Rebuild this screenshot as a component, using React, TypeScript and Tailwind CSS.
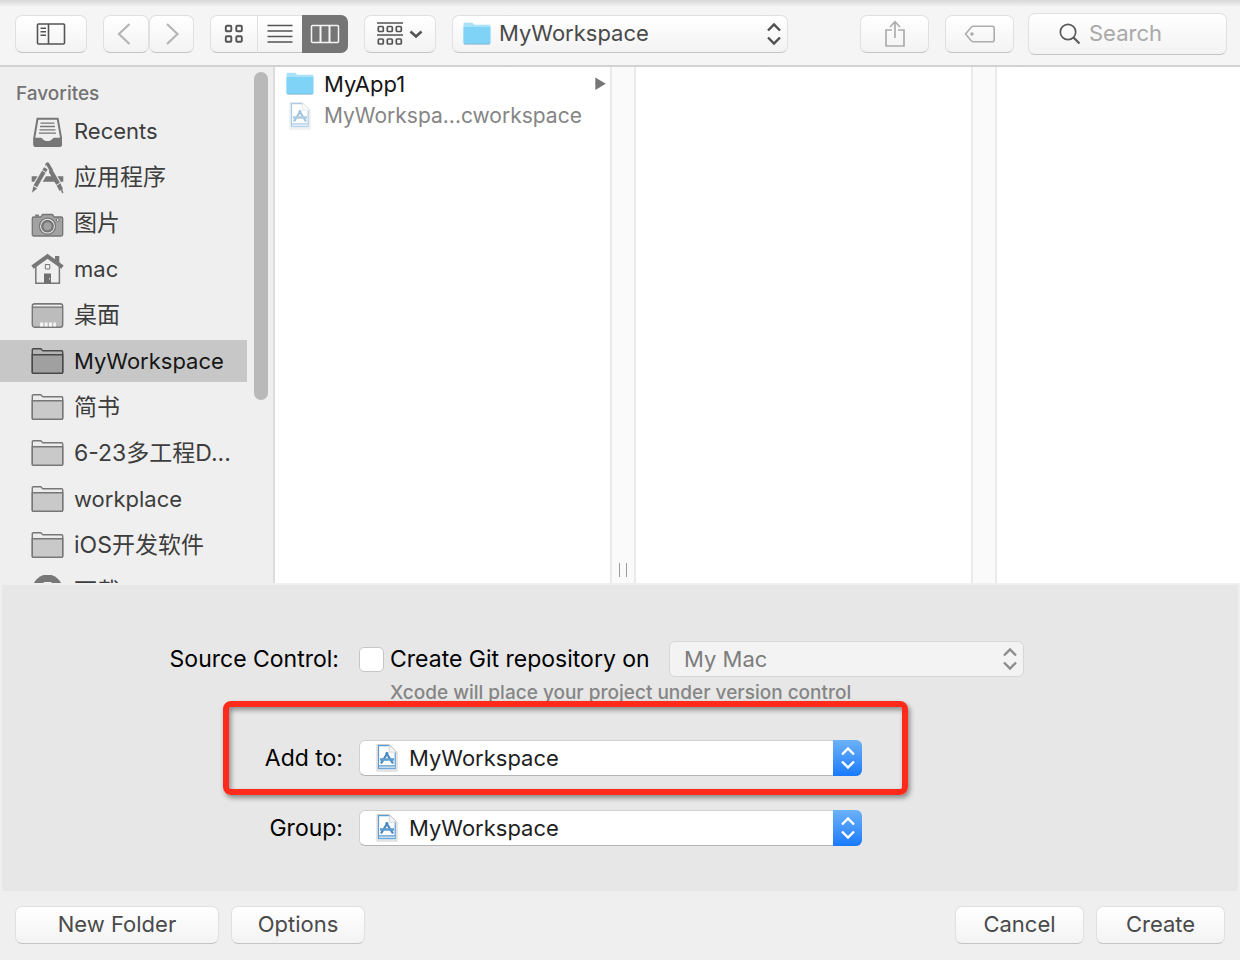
import type { ReactNode } from "react";

type IconName = "recents" | "apps" | "camera" | "home" | "desktop" | "folder" | "download";

const favorites: { name: string; icon: IconName; selected?: boolean; cjk?: boolean }[] = [
  { name: "Recents", icon: "recents" },
  { name: "应用程序", icon: "apps", cjk: true },
  { name: "图片", icon: "camera", cjk: true },
  { name: "mac", icon: "home" },
  { name: "桌面", icon: "desktop", cjk: true },
  { name: "MyWorkspace", icon: "folder", selected: true },
  { name: "简书", icon: "folder", cjk: true },
  { name: "6-23多工程D...", icon: "folder", cjk: true },
  { name: "workplace", icon: "folder" },
  { name: "iOS开发软件", icon: "folder", cjk: true },
  { name: "下载", icon: "download", cjk: true },
];

const sidebarIcons: Record<IconName, ReactNode> = {
  recents: (
    <>
      <path d="M6.500 3.800h20.200L30 22.500v7.300a1.200 1.200 0 0 1-1.200 1.200H4.500a1.200 1.200 0 0 1-1.200-1.200v-7.300z" fill="#efefef" stroke="#777" strokeWidth="2" />
      <path d="M9.500 8.200h14M9 11.500h15M8.500 14.800h16M8 18.100h17" stroke="#777" strokeWidth="1.300" />
      <path d="M2.500 22.700h7.500c1.500 0 1.800 3.300 6.500 3.300s5-3.300 6.500-3.300H31v7.100a1.700 1.700 0 0 1-1.700 1.700H4.200a1.700 1.700 0 0 1-1.700-1.700z" fill="#777" />
    </>
  ),
  apps: (
    <>
      <path d="M.7 15.200h5.800l-3.300 5.600H.7zM12.400 15.200h8.800l3 5.600H9.200zM26.500 15.200h5.800v5.600h-2.600z" fill="#777" />
      <path d="M16.500 4.500 27.800 24" stroke="#777" strokeWidth="4.400" strokeLinecap="round" />
      <path d="m27.500 23.500 2.800 5.500" stroke="#777" strokeWidth="4" />
      <path d="m30.700 29 1 3" stroke="#777" strokeWidth="1.500" />
      <path d="M17.800 5.200 4 28" stroke="#efefef" strokeWidth="5.600" />
      <path d="M15.500 4.200 16.600 3l4 6.800" stroke="#777" strokeWidth="3.400" strokeLinejoin="round" fill="none" />
      <path d="M14.800 7.200 4.400 25.300" stroke="#777" strokeWidth="4.200" />
      <path d="m11.200 9.400 3.600 2.100M25 24.500l4-2.300" stroke="#efefef" strokeWidth="1" />
      <path d="m2.300 25.300 3.800 2.200L1 31.800z" fill="#777" />
    </>
  ),
  camera: (
    <>
      <path d="M4 7.600h4v2H4z" fill="#7b7b7b" />
      <path d="M2.800 10h7l1.700-2.500h10L23.200 10h7c.9 0 1.500.6 1.500 1.500v16c0 .9-.6 1.500-1.500 1.500H2.800c-.9 0-1.500-.6-1.500-1.500v-16c0-.9.6-1.500 1.500-1.500z" fill="#a2a2a2" stroke="#757575" strokeWidth="1.300" />
      <circle cx="16.500" cy="19.200" r="8" fill="#efefef" stroke="#757575" strokeWidth="1.200" />
      <circle cx="16.500" cy="19.200" r="5.200" fill="#a2a2a2" stroke="#757575" strokeWidth="2.400" />
      <circle cx="26.700" cy="13" r="1.400" fill="#efefef" stroke="#757575" />
    </>
  ),
  home: (
    <>
      <path d="M24 3h4.300v9L24 8z" fill="#777" />
      <path d="M4.800 12v18.300h23.600V12L16.600 3z" fill="#efefef" stroke="#777" strokeWidth="1.500" />
      <path d="M1.500 14.200 16.500 3.300l15 10.900" stroke="#777" strokeWidth="4" fill="none" />
      <path d="M14.300 11.500h4.500V16h-4.500z" fill="#efefef" stroke="#777" strokeWidth="1" />
      <path d="M13 20.500h7v10h-7z" fill="#707070" />
      <path d="M18 25h1v1.500h-1z" fill="#ddd" />
    </>
  ),
  desktop: (
    <>
      <rect x="1.300" y="4.700" width="30.400" height="23.600" rx="2.500" fill="#bcbcbc" stroke="#777" strokeWidth="1.400" />
      <path d="M2.500 6h28v1.500h-28z" fill="#efefef" />
      <path d="M2 8.200h29" stroke="#777" strokeWidth="1.200" />
      <path d="M9 23.500h3.300v4H9zM13.600 23.500h3v4h-3zM18 23.500h3v4h-3zM22.300 23.500h2.600v4h-2.600z" fill="#f4f4f4" />
    </>
  ),
  folder: (
    <>
      <path d="M1.300 27.200V4.700c0-.6.4-1 1-1h7.400c.8 0 1.200 2 2.300 2h18.700c.6 0 1 .4 1 1v20.500c0 .6-.4 1-1 1H2.300c-.6 0-1-.4-1-1z" fill="var(--tab)" stroke="currentColor" strokeWidth="1.400" />
      <path d="M1.300 9.800h30.400v17.400c0 .6-.4 1-1 1H2.300c-.6 0-1-.4-1-1z" fill="var(--front)" stroke="currentColor" strokeWidth="1.400" />
    </>
  ),
  download: (
    <>
      <circle cx="16.500" cy="14.500" r="15" fill="#777" />
      <path d="M12.700 7h7.800v7.500h4l-7.900 8.200-8-8.200h4.100z" fill="#efefef" />
    </>
  ),
};

function BlueFolder() {
  return (
    <svg width="28" height="24" viewBox="0 0 28 24" aria-hidden="true">
      <path d="M.5 3V2c0-.8.5-1.200 1.200-1.200h7.200c1 0 1.600 2 2.800 2h14.500c.8 0 1.200.5 1.200 1.200v17.500H.5z" fill="#a9e1f9" />
      <path d="M.5 5h26.900v15.800c0 .8-.4 1.200-1.200 1.200H1.700c-.8 0-1.200-.4-1.200-1.200z" fill="#7fd3f7" />
      <path d="M.8 21.700c.2.500.5.800.9.800h24.500c.4 0 .7-.3.900-.8z" fill="#6fa9c4" />
    </svg>
  );
}

function ProjectFile({ className = "" }: { className?: string }) {
  return (
    <svg className={className} width="22" height="28" viewBox="0 0 22 28" aria-hidden="true">
      <path d="M1 .5h12.500L21 8v19H1z" fill="#f7f7f7" stroke="#cfcfcf" />
      <path d="M2.500 1.700h11L19.200 8v16.700H2.500z" fill="#fff" stroke="#5a9bd0" strokeWidth="1.200" />
      <path d="M13.300.7v7.500h7.500z" fill="#f4f4f4" stroke="#cfcfcf" strokeWidth=".8" />
      <path d="M3 21.800h15.700v2.400H3z" fill="#c4dcee" />
      <path d="M3 21.800h15.700" stroke="#4f92c8" />
      <path d="M11.800 8.500 5 19.500M10 8.500l7 11" stroke="#4587be" strokeWidth="2.200" />
      <path d="M4 15.500h14" stroke="#5f9ccd" strokeWidth="2.600" />
    </svg>
  );
}

function Chevrons({ className = "" }: { className?: string }) {
  return (
    <svg className={className} width="16" height="24" viewBox="0 0 16 24" fill="none" stroke="currentColor" strokeWidth="2.400" aria-hidden="true">
      <path d="m2 8.500 6-6 6 6M2 15.500l6 6 6-6" />
    </svg>
  );
}

const raised =
  "flex items-center justify-center rounded-[7px] border border-[#e0e0e0] border-b-[#c4c4c4] bg-linear-to-b from-white to-[#f3f3f3]";

function Toolbar() {
  return (
    <header className="flex h-[67px] shrink-0 items-center border-b-2 border-[#d2d2d2] bg-linear-to-b from-[#d8d8d8] to-[#f5f5f5] to-[7px] pt-0.5 pr-[13px] pl-[15px]">
      <button aria-label="Toggle sidebar" className={`${raised} h-[38px] w-[72px]`}>
        <svg width="30" height="22" viewBox="0 0 30 22" fill="none" stroke="#545454" strokeWidth="1.600">
          <rect x="1.500" y="1" width="27" height="20" rx="1" />
          <path d="M12.500 1v20M4.500 5.200h5.500M4.500 8.700h5.500M4.500 12.200h5.500" />
        </svg>
      </button>
      <div className="ml-4 flex">
        <button aria-label="Back" className={`${raised} h-[38px] w-[46px] pr-1`}>
          <svg width="16" height="22" viewBox="0 0 16 22" fill="none" stroke="#b5b5b5" strokeWidth="2.200">
            <path d="M13.500 1 3 11l10.500 10" />
          </svg>
        </button>
        <button aria-label="Forward" className={`${raised} h-[38px] w-[45px]`}>
          <svg width="16" height="22" viewBox="0 0 16 22" fill="none" stroke="#b5b5b5" strokeWidth="2.200">
            <path d="M3 1l10.500 10L3 21" />
          </svg>
        </button>
      </div>
      <div className="ml-4 flex">
        <button aria-label="Icon view" className={`${raised} h-[38px] w-12 rounded-r-none`}>
          <svg width="20" height="20" viewBox="0 0 20 20" fill="none" stroke="#545454" strokeWidth="1.900">
            <rect x="1.800" y="1.800" width="5.500" height="5.500" rx="1" />
            <rect x="12.300" y="1.800" width="5.500" height="5.500" rx="1" />
            <rect x="1.800" y="12.300" width="5.500" height="5.500" rx="1" />
            <rect x="12.300" y="12.300" width="5.500" height="5.500" rx="1" />
          </svg>
        </button>
        <button aria-label="List view" className={`${raised} h-[38px] w-11 rounded-none border-x-0`}>
          <svg width="26" height="20" viewBox="0 0 26 20" stroke="#545454" strokeWidth="1.600">
            <path d="M.5 1.500h25M.5 7h25M.5 12.500h25M.5 18h25" />
          </svg>
        </button>
        <button aria-label="Column view" className="flex h-[38px] w-[46px] items-center justify-center rounded-r-[7px] bg-[#757575]">
          <svg width="30" height="20" viewBox="0 0 30 20" fill="none" stroke="#f5f5f5" strokeWidth="1.500">
            <rect x="1.500" y="1.500" width="27" height="17" rx="1" />
            <path d="M10.500 1.500v17M19.500 1.500v17" strokeWidth="2" />
          </svg>
        </button>
      </div>
      <button aria-label="Group items" className={`${raised} ml-4 h-[38px] w-[72px] gap-1.5`}>
        <svg width="26" height="24" viewBox="0 0 26 24" fill="none" stroke="#545454" strokeWidth="1.700">
          <path d="M0 1h26M0 13h26" />
          <rect x="1.300" y="4.500" width="5" height="5" rx="1" />
          <rect x="10.300" y="4.500" width="5" height="5" rx="1" />
          <rect x="19.300" y="4.500" width="5" height="5" rx="1" />
          <rect x="1.300" y="17" width="5" height="5" rx="1" />
          <rect x="10.300" y="17" width="5" height="5" rx="1" />
          <rect x="19.300" y="17" width="5" height="5" rx="1" />
        </svg>
        <svg width="14" height="10" viewBox="0 0 14 10" fill="none" stroke="#545454" strokeWidth="2.600">
          <path d="m1.500 2.500 5.500 5 5.500-5" />
        </svg>
      </button>
      <div className="relative ml-4 w-[336px]">
        <select
          aria-label="Location"
          className="block h-[38px] w-full appearance-none rounded-[7px] border border-[#e0e0e0] border-b-[#c4c4c4] bg-linear-to-b from-white to-[#f3f3f3] pl-[46px] text-[#4a4a4a]"
        >
          <option>MyWorkspace</option>
        </select>
        <span className="pointer-events-none absolute inset-y-0 left-[11px] flex items-center">
          <BlueFolder />
        </span>
        <Chevrons className="pointer-events-none absolute top-[7px] right-1.5 text-[#4f4f4f]" />
      </div>
      <button aria-label="Share" className={`${raised} ml-auto h-[38px] w-[69px]`}>
        <svg width="22" height="28" viewBox="0 0 22 28" fill="none" stroke="#adadad" strokeWidth="1.700">
          <path d="M8 10H2v16h18V10h-6M11 18V2M6 7l5-5.300L16 7" />
        </svg>
      </button>
      <button aria-label="Tags" className={`${raised} ml-4 h-[38px] w-[69px]`}>
        <svg width="32" height="18" viewBox="0 0 32 18" fill="none" stroke="#adadad" strokeWidth="1.600">
          <path d="M9.500 1.200h18.700c1.400 0 2 .6 2 2v11.600c0 1.400-.6 2-2 2H9.500c-1 0-1.600-.3-2.300-1L1.500 9l5.700-6.800c.7-.7 1.300-1 2.300-1z" />
          <circle cx="8" cy="9" r="1.800" fill="#adadad" stroke="none" />
        </svg>
      </button>
      <label className={`${raised} ml-3.5 h-[42px] w-[199px] justify-start pl-[30px]`}>
        <svg className="shrink-0" width="22" height="22" viewBox="0 0 22 22" fill="none" stroke="#5a5a5a" strokeWidth="1.700">
          <circle cx="9" cy="9" r="7.700" />
          <path d="m14.500 14.500 6 6" strokeWidth="2.200" />
        </svg>
        <input aria-label="Search" placeholder="Search" className="ml-2 w-0 flex-1 bg-transparent outline-none placeholder:text-[#a9a9a9]" />
      </label>
    </header>
  );
}

function Sidebar() {
  return (
    <nav className="flex w-[275px] shrink-0 overflow-hidden border-r-2 border-[#dcdcdc] bg-[#efefef] text-[#3d3d3d]">
      <div className="flex-1">
        <h2 className="h-[43px] pt-[13px] pl-4 text-[19px] leading-7 font-medium text-[#737373]">Favorites</h2>
        <ul className="space-y-1">
          {favorites.map((item) => (
            <li key={item.name}>
              <button
                className={`flex h-[42px] w-full items-center gap-2.5 pl-[31px] text-left whitespace-nowrap ${
                  item.selected ? "bg-[#c7c7c7] text-[#161616]" : ""
                } ${item.cjk ? "text-[23px]" : ""}`}
              >
                <svg
                  className={`shrink-0 ${
                    item.selected ? "text-[#484848] [--front:#a0a0a0] [--tab:#b4b4b4]" : "text-[#777] [--front:#c9c9c9] [--tab:#ececec]"
                  }`}
                  width="33"
                  height="33"
                  viewBox="0 0 33 33"
                  fill="none"
                  aria-hidden="true"
                >
                  {sidebarIcons[item.icon]}
                </svg>
                {item.name}
              </button>
            </li>
          ))}
        </ul>
      </div>
      <div className="mt-[5px] mr-[5px] ml-[7px] h-[328px] w-3.5 rounded-full bg-[#b9b9b9]" />
    </nav>
  );
}

function Browser() {
  return (
    <div className="flex min-w-0 flex-1 bg-white">
      <ul className="w-[335px] pt-px pl-[11px]">
        <li>
          <button className="flex h-8 w-full items-center gap-2.5 pr-1 text-[#161616]">
            <BlueFolder />
            MyApp1
            <svg className="ml-auto" width="11" height="14" viewBox="0 0 11 14" aria-hidden="true">
              <path d="M.3.500v12.500L10.800 6.700z" fill="#777" />
            </svg>
          </button>
        </li>
        <li>
          <button disabled className="flex h-8 w-full items-center gap-2.5 text-[21px] text-[#858585]">
            <span className="flex w-7 justify-center">
              <ProjectFile className="opacity-50" />
            </span>
            MyWorkspa...cworkspace
          </button>
        </li>
      </ul>
      <div className="flex w-[26px] items-end justify-center border-x-2 border-[#eaeaea] bg-[#fafafa] pb-1.5">
        <div className="h-3.5 w-2 border-x border-[#9c9c9c]" />
      </div>
      <div className="w-[335px]" />
      <div className="w-[26px] border-x-2 border-[#eaeaea] bg-[#fafafa]" />
      <div className="flex-1" />
    </div>
  );
}

function ProjectSelect({ id }: { id: string }) {
  return (
    <div className="relative w-[503px] text-[22px]">
      <select
        id={id}
        className="block h-9 w-full appearance-none rounded-[6px] border border-[#d0d0d0] border-b-[#b4b4b4] bg-white pl-[49px] text-[#1f1f1f]"
      >
        <option>MyWorkspace</option>
      </select>
      <span className="pointer-events-none absolute inset-y-0 left-[17px] flex items-center">
        <ProjectFile />
      </span>
      <span className="pointer-events-none absolute inset-y-0 right-0 flex w-[29px] items-center justify-center rounded-r-[6px] bg-linear-to-b from-[#6bb1f8] to-[#157afb] text-white">
        <Chevrons />
      </span>
    </div>
  );
}

function Options() {
  return (
    <form className="mx-0.5 shrink-0 bg-[#e7e7e7] pt-14 pb-[45px] text-[23px] text-black">
      <div className="grid grid-cols-[341px_1fr] gap-x-4">
        <span className="pr-1 text-right leading-9">Source Control:</span>
        <div className="flex h-9 items-center">
          <input
            id="git"
            type="checkbox"
            className="size-[25px] appearance-none rounded-[5px] border border-[#c6c6c6] bg-white checked:bg-[#157afb]"
          />
          <label htmlFor="git" className="w-[285px] pl-1.5 whitespace-nowrap">
            Create Git repository on
          </label>
          <div className="relative w-[355px] text-[22px]">
            <select
              disabled
              aria-label="Repository location"
              className="block h-9 w-full appearance-none rounded-[6px] border border-[#d6d6d6] bg-[#f3f3f3] pl-3.5 text-[#7d7d7d] opacity-100"
            >
              <option>My Mac</option>
            </select>
            <Chevrons className="pointer-events-none absolute top-1.5 right-1.5 text-[#8c8c8c]" />
          </div>
        </div>
        <p className="col-start-2 mt-1 pl-[31px] text-[19px] leading-6 font-medium text-[#858585]">
          Xcode will place your project under version control
        </p>
      </div>
      <div className="relative mt-[35px] grid grid-cols-[341px_1fr] gap-x-4 gap-y-[34px]">
        <label htmlFor="add-to" className="text-right leading-9">
          Add to:
        </label>
        <ProjectSelect id="add-to" />
        <label htmlFor="group" className="text-right leading-9">
          Group:
        </label>
        <ProjectSelect id="group" />
        <div className="pointer-events-none absolute -top-[39px] left-[221px] h-[94px] w-[685px] rounded-[8px] border-6 border-[#ff2b1a] shadow-[2px_3px_5px_rgba(0,0,0,0.4),inset_2px_3px_5px_rgba(0,0,0,0.4)]" />
      </div>
    </form>
  );
}

function Footer() {
  const button = `${raised} h-[38px] text-[#4a4a4a]`;
  return (
    <footer className="flex h-[69px] shrink-0 items-center gap-3 px-[15px] pb-0.5">
      <button className={`${button} w-[204px]`}>New Folder</button>
      <button className={`${button} w-[134px]`}>Options</button>
      <button className={`${button} ml-auto w-[129px]`}>Cancel</button>
      <button className={`${button} w-[129px]`}>Create</button>
    </footer>
  );
}

export default function App() {
  return (
    <div className="flex h-screen flex-col overflow-hidden bg-[#efefef] font-[Inter,'Noto_Sans_CJK_SC',sans-serif] text-[22px]">
      <Toolbar />
      <main className="mb-0.5 flex min-h-0 flex-1">
        <Sidebar />
        <Browser />
      </main>
      <Options />
      <Footer />
    </div>
  );
}
